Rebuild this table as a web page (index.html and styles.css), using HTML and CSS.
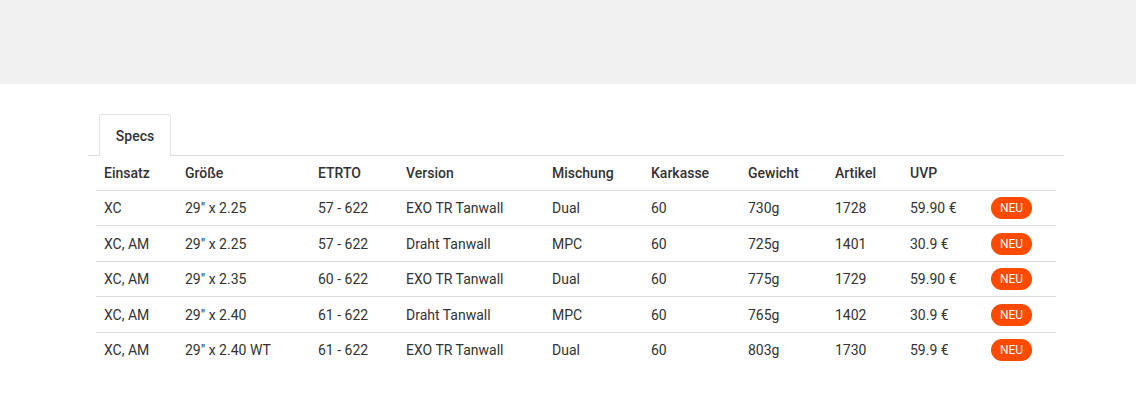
FILE: index.html
```html
<!DOCTYPE html>
<html lang="de">
<head>
<meta charset="utf-8">
<link rel="stylesheet" href="styles.css">
</head>
<body>
<div class="topband"></div>
<div class="content">
  <div class="tabs">
    <div class="tab">Specs</div>
  </div>
  <table class="specs">
    <colgroup>
      <col style="width:81px"><col style="width:133px"><col style="width:88px"><col style="width:146px"><col style="width:99px"><col style="width:97px"><col style="width:87px"><col style="width:75px"><col style="width:81px"><col>
    </colgroup>
    <thead>
      <tr><th>Einsatz</th><th>Größe</th><th>ETRTO</th><th>Version</th><th>Mischung</th><th>Karkasse</th><th>Gewicht</th><th>Artikel</th><th>UVP</th><th></th></tr>
    </thead>
    <tbody>
      <tr><td>XC</td><td>29" x 2.25</td><td>57 - 622</td><td>EXO TR Tanwall</td><td>Dual</td><td>60</td><td>730g</td><td>1728</td><td>59.90 €</td><td><span class="badge">NEU</span></td></tr>
      <tr><td>XC, AM</td><td>29" x 2.25</td><td>57 - 622</td><td>Draht Tanwall</td><td>MPC</td><td>60</td><td>725g</td><td>1401</td><td>30.9 €</td><td><span class="badge">NEU</span></td></tr>
      <tr><td>XC, AM</td><td>29" x 2.35</td><td>60 - 622</td><td>EXO TR Tanwall</td><td>Dual</td><td>60</td><td>775g</td><td>1729</td><td>59.90 €</td><td><span class="badge">NEU</span></td></tr>
      <tr><td>XC, AM</td><td>29" x 2.40</td><td>61 - 622</td><td>Draht Tanwall</td><td>MPC</td><td>60</td><td>765g</td><td>1402</td><td>30.9 €</td><td><span class="badge">NEU</span></td></tr>
      <tr><td>XC, AM</td><td>29" x 2.40 WT</td><td>61 - 622</td><td>EXO TR Tanwall</td><td>Dual</td><td>60</td><td>803g</td><td>1730</td><td>59.9 €</td><td><span class="badge">NEU</span></td></tr>
    </tbody>
  </table>
</div>
</body>
</html>
```

FILE: styles.css
```css
html, body {
  margin: 0;
  padding: 0;
  background: #fff;
}
body {
  font-family: Roboto, "Liberation Sans", sans-serif;
  color: #333;
  font-size: 14px;
}
.topband {
  height: 84px;
  background: #f1f1f1;
}
.content {
  width: 976px;
  margin: 30px 0 0 88px;
}
.tabs {
  display: flex;
  border-bottom: 1px solid #dcdcdc;
  padding-left: 11px;
}
.tab {
  width: 72px;
  height: 42px;
  box-sizing: border-box;
  border: 1px solid #e2e2e2;
  border-bottom: none;
  border-radius: 3px 3px 0 0;
  background: #fff;
  margin-bottom: -1px;
  display: flex;
  align-items: center;
  justify-content: center;
  font-weight: 500;
  font-size: 14px;
  color: #333;
}
.specs {
  border-collapse: collapse;
  width: 960px;
  margin-left: 8px;
  table-layout: fixed;
}
.specs th, .specs td {
  text-align: left;
  padding: 0 8px;
  height: 35px;
  vertical-align: middle;
  white-space: nowrap;
}
.specs th {
  font-weight: 500;
  height: 34px;
}
.specs thead tr, .specs tbody tr:not(:last-child) {
  border-bottom: 1px solid #dddddd;
}
.specs tbody tr:nth-child(odd) td { height: 34px; }
.badge {
  display: inline-block;
  background: #ff4a00;
  color: #fff;
  font-size: 12px;
  line-height: 22px;
  height: 22px;
  width: 41px;
  text-align: center;
  border-radius: 11px;
}
```
